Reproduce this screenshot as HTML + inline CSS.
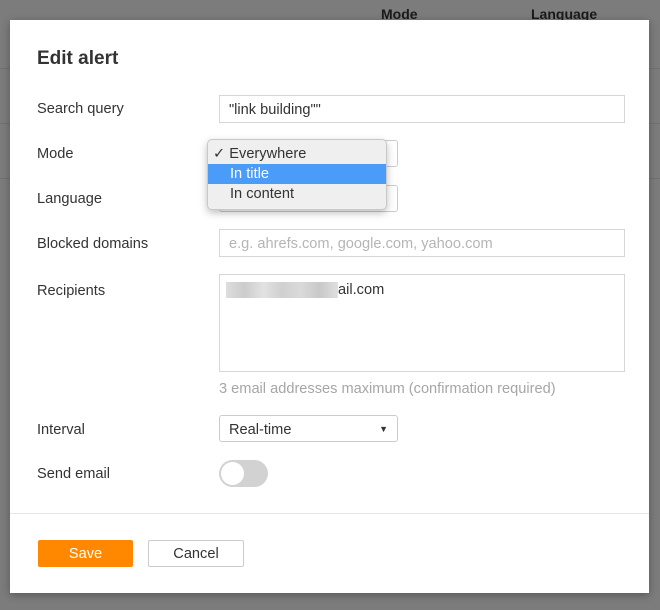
<!DOCTYPE html>
<html><head><style>
*{box-sizing:border-box;margin:0;padding:0}
body{width:660px;height:610px;background:#7c7c7c;font-family:"Liberation Sans",sans-serif;position:relative;overflow:hidden;font-size:14.6px;color:#333}
.hdr{position:absolute;top:6px;font-weight:bold;font-size:14px;color:#1a1a1a}
.line{position:absolute;left:0;right:0;height:1px;background:#727272}
.modal{position:absolute;left:10px;top:20px;width:639px;height:573px;background:#fff;box-shadow:0 2px 8px rgba(0,0,0,.3)}
.a{position:absolute}
.lbl{position:absolute;left:27px;font-size:14.6px;color:#333}
.inp{position:absolute;left:209px;border:1px solid #d6d6d6;background:#fff}
.sel{position:absolute;left:209px;width:179px;height:27px;border:1px solid #ccc;border-radius:3px;background:#fff}
</style></head><body>
<div class="hdr" style="left:381px">Mode</div>
<div class="hdr" style="left:531px">Language</div>
<div class="line" style="top:68px"></div>
<div class="line" style="top:123px"></div>
<div class="line" style="top:178px"></div>
<div class="modal">
<div class="a" style="left:27px;top:28px;font-size:19px;font-weight:bold;color:#333">Edit alert</div>
<div class="lbl" style="top:81px">Search query</div>
<div class="inp" style="top:75px;width:406px;height:28px;padding:6px 9px;color:#333">"link building""</div>
<div class="lbl" style="top:126px">Mode</div>
<div class="sel" style="top:120px"></div>
<div class="lbl" style="top:171px">Language</div>
<div class="sel" style="top:165px"></div>
<div class="a" style="left:197px;top:119px;width:180px;height:71px;background:#efefef;border:1px solid #c8c8c8;border-radius:5px;box-shadow:0 3px 8px rgba(0,0,0,.25);color:#333">
<div style="height:24px;padding:6px 0 0 5px;line-height:16px">✓ Everywhere</div>
<div style="height:20px;background:#4a9cf8;color:#fff;padding-left:22px;line-height:21px">In title</div>
<div style="height:20px;padding-left:22px;line-height:21px">In content</div>
</div>
<div class="lbl" style="top:216px">Blocked domains</div>
<div class="inp" style="top:209px;width:406px;height:28px;padding:6px 9px;color:#b5b5b5">e.g. ahrefs.com, google.com, yahoo.com</div>
<div class="lbl" style="top:263px">Recipients</div>
<div class="inp" style="top:254px;width:406px;height:98px"></div>
<div class="a" style="left:216px;top:262px;width:112px;height:16px;background:linear-gradient(90deg,#ddd,#ccc,#e2e2e2,#d0d0d0,#dadada,#c8c8c8,#e0e0e0)"></div>
<div class="a" style="left:328px;top:262px;color:#333">ail.com</div>
<div class="a" style="left:209px;top:361px;color:#a6a6a6">3 email addresses maximum (confirmation required)</div>
<div class="lbl" style="top:402px">Interval</div>
<div class="sel" style="top:395px;padding:6px 9px">Real-time<span style="position:absolute;right:9px;top:8px;font-size:9px">▼</span></div>
<div class="lbl" style="top:446px">Send email</div>
<div class="a" style="left:209px;top:440px;width:49px;height:27px;border-radius:14px;background:#d2d2d2"><div style="position:absolute;left:2px;top:2px;width:23px;height:23px;border-radius:50%;background:#fff"></div></div>
<div class="a" style="left:0;right:0;top:493px;height:1px;background:#e6e6e6"></div>
<div class="a" style="left:28px;top:520px;width:95px;height:27px;background:#ff8800;border-radius:2px;color:#fff;text-align:center;line-height:28px">Save</div>
<div class="a" style="left:138px;top:520px;width:96px;height:27px;border:1px solid #ccc;border-radius:2px;color:#333;text-align:center;line-height:26px">Cancel</div>
</div>
</body></html>
